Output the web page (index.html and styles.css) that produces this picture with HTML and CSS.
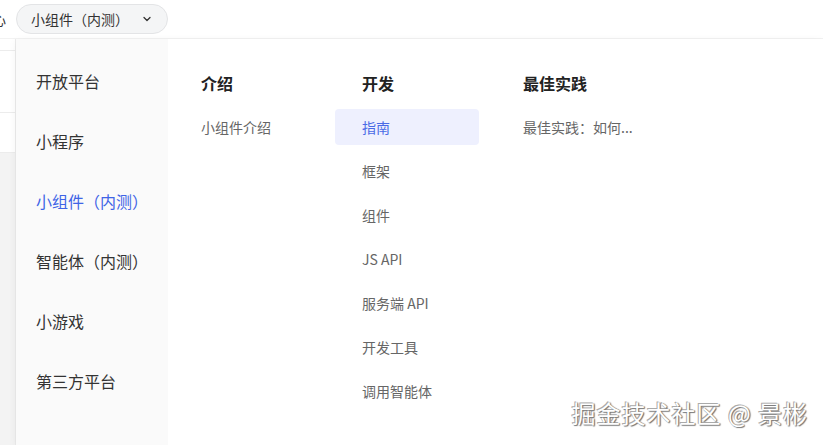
FILE: index.html
```html
<!DOCTYPE html>
<html lang="zh-CN">
<head>
    <meta charset="UTF-8">
    <meta name="viewport" content="width=device-width, initial-scale=1.0">
    <title>小组件（内测）</title>
    <link rel="stylesheet" href="styles.css">
</head>
<body>
    <div class="topbar">
        <span class="crumb">中心</span>
        <div class="switcher">
            <span>小组件（内测）</span>
            <svg class="chevron" width="12" height="12" viewBox="0 0 12 12"><path d="M3 4.5 L6 7.5 L9 4.5" fill="none" stroke="#333" stroke-width="1.3" stroke-linecap="round" stroke-linejoin="round"/></svg>
        </div>
    </div>

    <div class="main">
        <!-- page behind the dropdown -->
        <div class="behind">
            <div class="behind-row"></div>
            <div class="behind-row tall"></div>
            <div class="behind-row"></div>
            <div class="behind-rest"></div>
        </div>

        <div class="dropdown">
            <ul class="side">
                <li>开放平台</li>
                <li>小程序</li>
                <li class="active">小组件（内测）</li>
                <li>智能体（内测）</li>
                <li>小游戏</li>
                <li>第三方平台</li>
            </ul>
            <div class="cols">
                <div class="col">
                    <div class="col-title">介绍</div>
                    <div class="item">小组件介绍</div>
                </div>
                <div class="col">
                    <div class="col-title">开发</div>
                    <div class="item active">指南</div>
                    <div class="item">框架</div>
                    <div class="item">组件</div>
                    <div class="item">JS API</div>
                    <div class="item">服务端 API</div>
                    <div class="item">开发工具</div>
                    <div class="item">调用智能体</div>
                </div>
                <div class="col">
                    <div class="col-title">最佳实践</div>
                    <div class="item">最佳实践：如何...</div>
                </div>
            </div>
        </div>
    </div>

    <div class="watermark">掘金技术社区 @ 景彬</div>
</body>
</html>
```

FILE: styles.css
```css
body {
    margin: 0;
    padding: 0;
    font-family: "Noto Sans CJK SC", "Noto Sans", sans-serif;
    color: #333;
    background-color: #fff;
    height: 445px;
    overflow: hidden;
    position: relative;
}
.topbar {
    height: 38px;
    display: flex;
    align-items: center;
    border-bottom: 1px solid #f2f2f2;
    overflow: hidden;
}
.crumb {
    font-size: 14px;
    margin-left: -22px;
    margin-right: 10px;
    color: #333;
}
.switcher {
    height: 28px;
    width: 150px;
    box-sizing: content-box;
    border: 1px solid #e3e4e6;
    border-radius: 16px;
    background-color: #f4f5f6;
    display: flex;
    align-items: center;
    font-size: 14px;
    color: #333;
}
.switcher span {
    margin-left: 14px;
}
.chevron {
    margin-left: 12px;
}
.main {
    display: flex;
    height: 406px;
}
.behind {
    width: 15px;
    border-right: 1px solid #ebebeb;
    display: flex;
    flex-direction: column;
}
.behind-row {
    height: 11px;
    border-bottom: 1px solid #ececec;
}
.behind-row.tall {
    height: 61px;
}
.behind-row:nth-child(3) {
    height: 39px;
}
.behind-rest {
    flex: 1;
    background-color: #f3f3f3;
}
.dropdown {
    flex: 1;
    display: flex;
    box-shadow: 0 2px 8px rgba(0, 0, 0, 0.06);
}
.side {
    list-style: none;
    margin: 0;
    padding: 12px 0 0 20px;
    width: 132px;
    background-color: #fafafa;
}
.side li {
    height: 60px;
    line-height: 60px;
    font-size: 16px;
    color: #333;
}
.side li.active {
    color: #3f64e6;
}
.cols {
    flex: 1;
    display: flex;
    gap: 17px;
    padding: 24px 0 0 6px;
}
.col {
    width: 144px;
    display: flex;
    flex-direction: column;
    gap: 8px;
}
.col-title {
    height: 40px;
    line-height: 40px;
    padding-left: 27px;
    font-size: 16px;
    font-weight: bold;
    color: #222;
    margin-bottom: -2px;
}
.item {
    height: 36px;
    line-height: 36px;
    padding-left: 27px;
    font-size: 14px;
    color: #666;
    border-radius: 4px;
    white-space: nowrap;
}
.item.active {
    background-color: #eef0fe;
    color: #4a6ae6;
}
.watermark {
    position: absolute;
    right: 15px;
    bottom: 15px;
    font-size: 24px;
    color: #fff;
    letter-spacing: 1px;
    text-shadow: 1px 1px 1px #777, -1px -1px 0 #aaa, 1px 0 1px #888;
}
```
